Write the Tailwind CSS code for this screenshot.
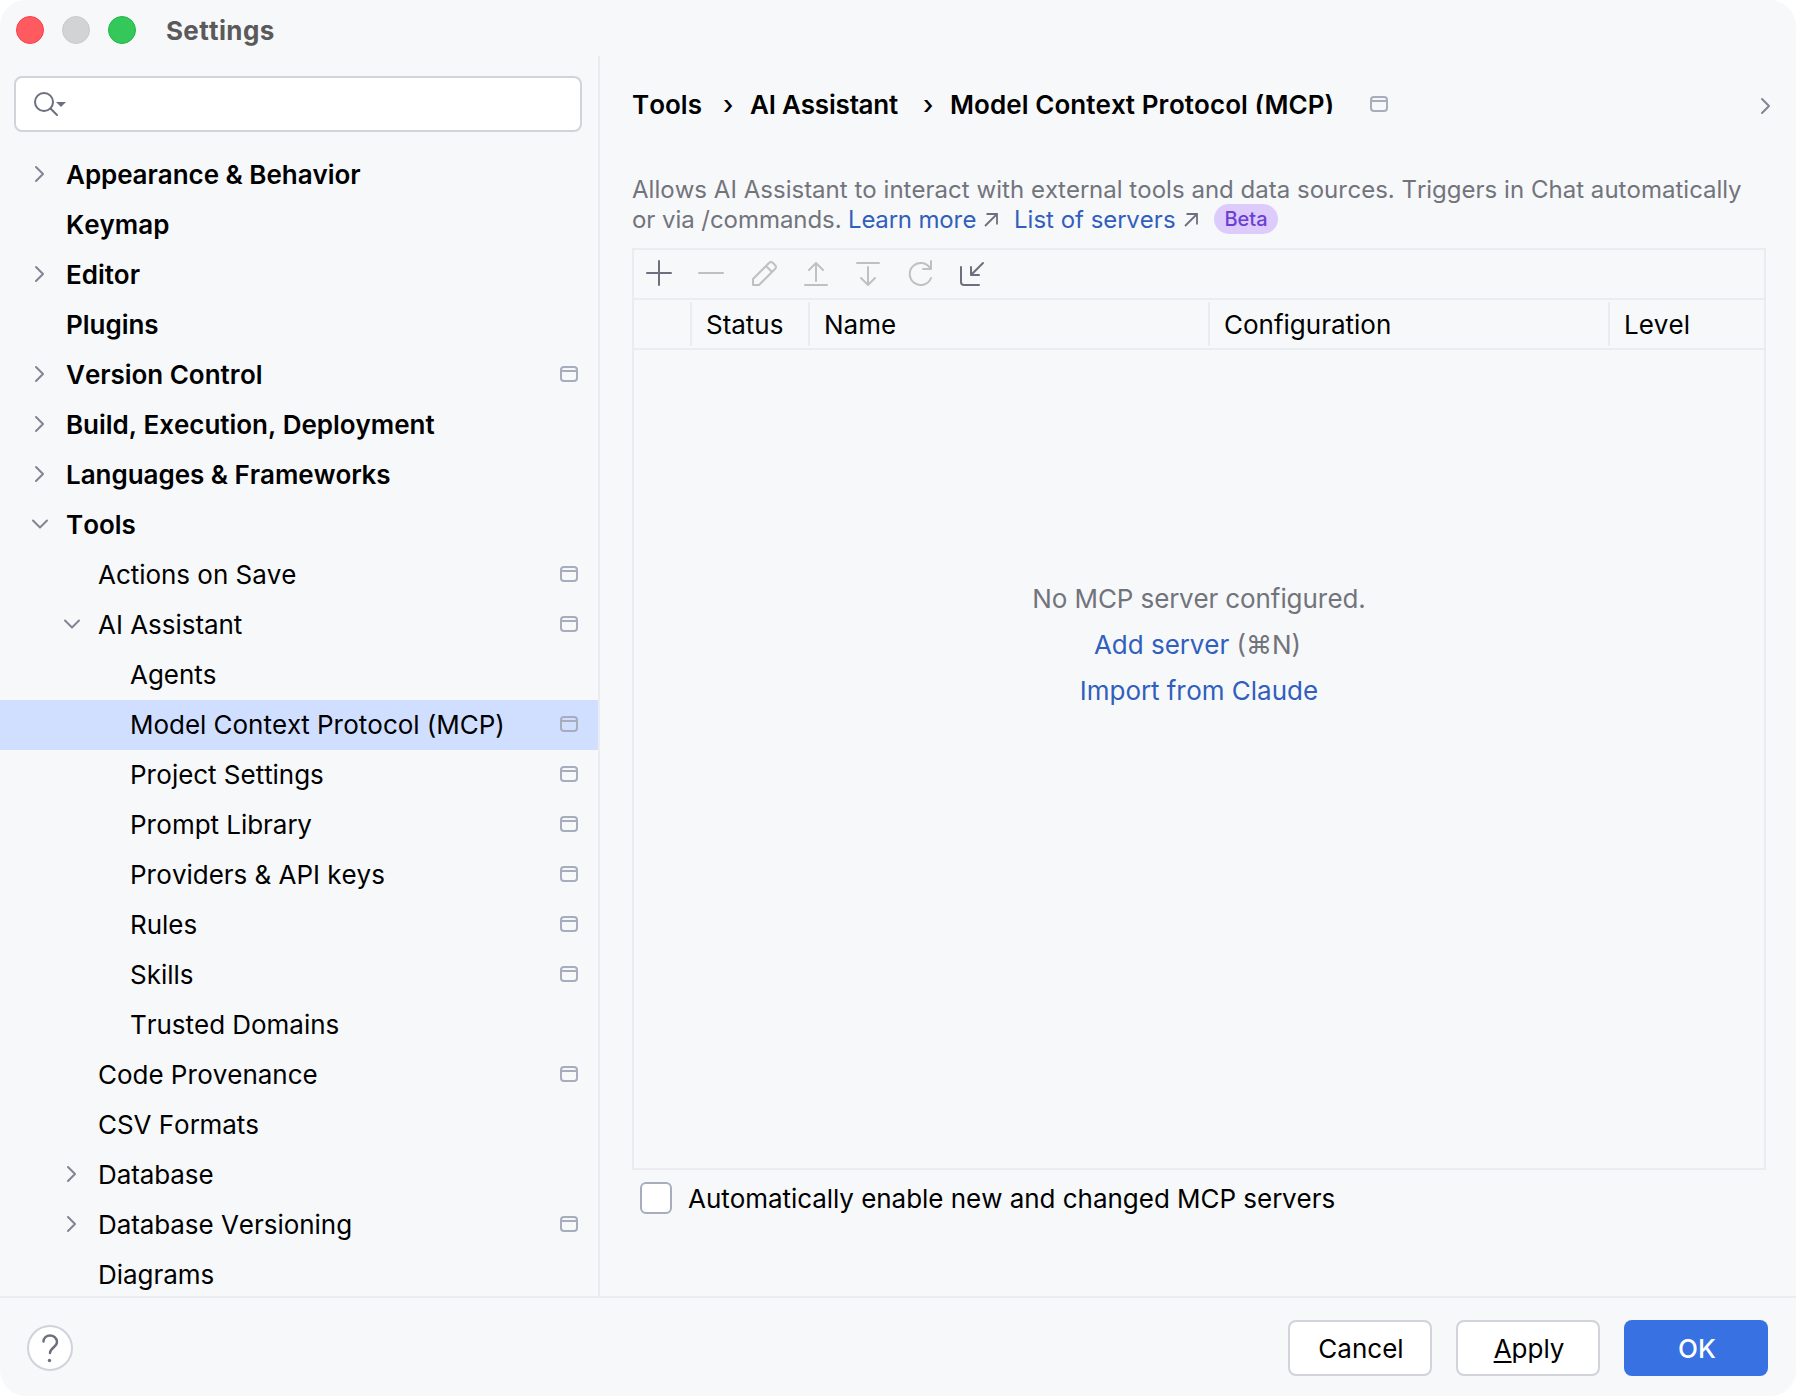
<!DOCTYPE html>
<html lang="en">
<head>
    <meta charset="UTF-8">
    <meta name="viewport" content="width=device-width, initial-scale=1.0">
    <title>Settings</title>
    <script src="https://cdn.jsdelivr.net/npm/@tailwindcss/browser@4"></script>
</head>
<body class="bg-white font-['Inter','Liberation_Sans',sans-serif] [font-kerning:none] text-[26px] leading-[50px] text-black">
    <!-- Shared icons -->
    <svg class="hidden">
        <symbol id="right" viewBox="0 0 32 32"><path d="M12 9l7 7-7 7" fill="none" stroke="currentColor" stroke-width="2" stroke-linecap="round" stroke-linejoin="round"/></symbol>
        <symbol id="down" viewBox="0 0 32 32"><path d="M9 12.500l7 7 7-7" fill="none" stroke="currentColor" stroke-width="2" stroke-linecap="round" stroke-linejoin="round"/></symbol>
        <symbol id="project" viewBox="0 0 18 16"><path d="M1 5h16M4 1h10a3 3 0 0 1 3 3v8a3 3 0 0 1-3 3H4a3 3 0 0 1-3-3V4a3 3 0 0 1 3-3z" fill="none" stroke="currentColor" stroke-width="2"/></symbol>
        <symbol id="external" viewBox="0 0 14 14"><path d="M1 13L12.500 1.500M2.500 1H13v10.500" fill="none" stroke="currentColor" stroke-width="1.800"/></symbol>
    </svg>

    <div class="flex flex-col w-[1796px] h-[1396px] rounded-[26px] bg-[#f7f8fa] overflow-hidden">
        <header class="flex items-center h-14 shrink-0 pl-4">
            <div class="flex gap-[18px] mt-1">
                <span class="size-7 rounded-full bg-[#ff5a5f] border border-[#f8414a]"></span>
                <span class="size-7 rounded-full bg-[#d2d3d5] border border-[#c9cacc]"></span>
                <span class="size-7 rounded-full bg-[#34c759] border border-[#1fb845]"></span>
            </div>
            <h1 class="ml-[30px] mt-1.5 font-bold tracking-[0.35px] text-[#5a5a5b]">Settings</h1>
        </header>

        <div class="flex h-[1240px] shrink-0">
            <aside class="w-[600px] shrink-0 border-r-2 border-[#ebecf0] pt-5 overflow-hidden">
                <div class="flex items-center w-[568px] h-14 ml-3.5 mb-[18px] pl-4 bg-white border-2 border-[#d1d3da] rounded-lg">
                    <svg class="w-10 h-8 text-[#6c707e]" viewBox="0 0 40 32">
                        <circle cx="12" cy="14" r="9" fill="none" stroke="currentColor" stroke-width="2"/>
                        <path d="M18.500 20.500l6.500 6.500" stroke="currentColor" stroke-width="2" stroke-linecap="round"/>
                        <path d="M24 14h10l-5 5z" fill="currentColor"/>
                    </svg>
                </div>
                <ul id="tree"></ul>
            </aside>

            <main class="grow pl-8 pt-6">
                <div class="flex items-start h-[50px] font-semibold">
                    <span class="w-[91px]">Tools</span>
                    <span class="w-[27px] font-medium">›</span>
                    <span class="w-[173px] tracking-[-0.2px]">AI Assistant</span>
                    <span class="w-[27px] font-medium">›</span>
                    <span class="h-[34px] overflow-hidden tracking-[0.07px]">Model Context Protocol (MCP)</span>
                    <svg class="w-[18px] h-4 mt-4 ml-auto text-[#a8adbd]"><use href="#project"/></svg>
                    <svg class="size-8 mt-[10px] ml-[362px] mr-[14px] text-[#818594]"><use href="#right"/></svg>
                </div>

                <p class="mt-[45px] text-2xl leading-[30px] text-[#72747c] whitespace-nowrap">
                    <span class="tracking-[0.03px]">Allows AI Assistant to interact with external tools and data sources. Triggers in Chat automatically</span>
                    <span class="flex items-center h-[30px]">
                        <span class="w-[216px] tracking-[-0.05px]">or via /commands.</span>
                        <a class="w-[136px] tracking-[-0.1px] text-[#315fbd]">Learn more</a>
                        <svg class="size-3.5 text-[#6c707e]"><use href="#external"/></svg>
                        <a class="ml-4 w-[170px] text-[#315fbd]">List of servers</a>
                        <svg class="size-3.5 text-[#6c707e]"><use href="#external"/></svg>
                        <span class="ml-4 -mt-0.5 w-16 h-[30px] rounded-full bg-[#dccbfb] text-[#6b3fd4] text-xl leading-[30px] font-medium text-center">Beta</span>
                    </span>
                </p>

                <section class="flex flex-col w-[1134px] h-[922px] mt-[13px] border-2 border-[#ebecf0]">
                    <div class="flex items-center gap-5 h-12 pl-3 text-[#bfc0c2]">
                        <svg class="size-8 text-[#6c707e]" viewBox="0 0 32 32" fill="none" stroke="currentColor" stroke-width="2" stroke-linecap="round"><path d="M13 3v24M1 15h24"/></svg>
                        <svg class="size-8" viewBox="0 0 32 32" fill="none" stroke="currentColor" stroke-width="2" stroke-linecap="round"><path d="M1 15h24"/></svg>
                        <svg class="size-8" viewBox="0 0 32 32" fill="none" stroke="currentColor" stroke-width="2" stroke-linejoin="round"><path d="M3 27v-6L19 5q2-2 4 0l2 2q2 2 0 4L9 27zM16 8l6 6"/></svg>
                        <svg class="size-8" viewBox="0 0 32 32" fill="none" stroke="currentColor" stroke-width="2" stroke-linecap="round" stroke-linejoin="round"><path d="M3 27h22M14 23V5M7 12l7-7 7 7"/></svg>
                        <svg class="size-8" viewBox="0 0 32 32" fill="none" stroke="currentColor" stroke-width="2" stroke-linecap="round" stroke-linejoin="round"><path d="M3 5h22M14 9v18M7 20l7 7 7-7"/></svg>
                        <svg class="size-8" viewBox="0 0 32 32" fill="none" stroke="currentColor" stroke-width="2" stroke-linecap="round" stroke-linejoin="round"><path d="M25 20a11 11 0 1 1-1-10M25 3v8h-8"/></svg>
                        <svg class="size-8 text-[#6c707e]" viewBox="0 0 32 32" fill="none" stroke="currentColor" stroke-width="2" stroke-linecap="round" stroke-linejoin="round"><path d="M3 9v15q0 3 3 3h15M25 5L13 17M13 9v8h8"/></svg>
                    </div>
                    <div class="flex items-center h-[52px] border-y-2 border-[#ebecf0]">
                        <span class="w-[58px] h-11 border-r-2 border-[#ebecf0]"></span>
                        <span class="w-[118px] h-11 pl-[14px] leading-[46px] border-r-2 border-[#ebecf0]">Status</span>
                        <span class="w-[400px] h-11 pl-[14px] leading-[46px] border-r-2 border-[#ebecf0]">Name</span>
                        <span class="w-[400px] h-11 pl-[14px] leading-[46px] border-r-2 border-[#ebecf0]">Configuration</span>
                        <span class="h-11 pl-[14px] leading-[46px]">Level</span>
                    </div>
                    <div class="pt-[226px] leading-[46px] text-center text-[#72747c]">
                        <p class="tracking-[-0.1px]">No MCP server configured.</p>
                        <p class="pr-[3px]"><a class="text-[#315fbd]">Add server</a> (⌘N)</p>
                        <p><a class="text-[#315fbd]">Import from Claude</a></p>
                    </div>
                </section>

                <label class="flex items-center h-14 pl-2 gap-4">
                    <span class="size-8 bg-white border-2 border-[#a8adbd] rounded-md"></span>
                    <span class="mt-0.5 tracking-[-0.03px]">Automatically enable new and changed MCP servers</span>
                </label>
            </main>
        </div>

        <footer class="flex items-center h-[100px] shrink-0 pl-[27px] pr-7 pt-0.5 gap-6 border-t-2 border-[#ebecf0]">
            <button class="size-[46px] mr-auto bg-white border-2 border-[#d1d3da] rounded-full">
                <svg class="size-[42px] text-[#6c707e]" viewBox="0 0 42 42" fill="none">
                    <path d="M14.500 14.500c0-3.500 3-6 6.500-6s7 2.500 7 6.500c0 5-7 6-7 11" stroke="currentColor" stroke-width="2.400" stroke-linecap="round"/>
                    <circle cx="20.500" cy="33.500" r="1.700" fill="currentColor"/>
                </svg>
            </button>
            <button class="w-36 h-14 pt-0.5 pl-0.5 leading-[50px] bg-white border-2 border-[#d1d3da] rounded-lg">Cancel</button>
            <button class="w-36 h-14 pt-0.5 pl-0.5 leading-[50px] bg-white border-2 border-[#d1d3da] rounded-lg"><u class="underline-offset-3 decoration-2">A</u>pply</button>
            <button class="w-36 h-14 pt-0.5 pl-0.5 leading-[54px] bg-[#3871e1] text-white font-medium rounded-lg">OK</button>
        </footer>
    </div>

    <script>
        const items = [
            { name: 'Appearance & Behavior', level: 0, arrow: 'right' },
            { name: 'Keymap', level: 0 },
            { name: 'Editor', level: 0, arrow: 'right' },
            { name: 'Plugins', level: 0 },
            { name: 'Version Control', level: 0, arrow: 'right', project: true },
            { name: 'Build, Execution, Deployment', level: 0, arrow: 'right' },
            { name: 'Languages & Frameworks', level: 0, arrow: 'right' },
            { name: 'Tools', level: 0, arrow: 'down' },
            { name: 'Actions on Save', level: 1, project: true },
            { name: 'AI Assistant', level: 1, arrow: 'down', project: true },
            { name: 'Agents', level: 2 },
            { name: 'Model Context Protocol (MCP)', level: 2, project: true, selected: true },
            { name: 'Project Settings', level: 2, project: true },
            { name: 'Prompt Library', level: 2, project: true },
            { name: 'Providers & API keys', level: 2, project: true },
            { name: 'Rules', level: 2, project: true },
            { name: 'Skills', level: 2, project: true },
            { name: 'Trusted Domains', level: 2 },
            { name: 'Code Provenance', level: 1, project: true },
            { name: 'CSV Formats', level: 1 },
            { name: 'Database', level: 1, arrow: 'right' },
            { name: 'Database Versioning', level: 1, arrow: 'right', project: true },
            { name: 'Diagrams', level: 1 },
        ];
        const padding = ['pl-6', 'pl-14', 'pl-[88px]'];

        document.getElementById('tree').innerHTML = items.map(item => `
            <li class="flex items-center h-[50px] pr-5 ${padding[item.level]} ${item.selected ? 'bg-[#d0deff]' : ''}">
                <svg class="size-8 -mt-0.5 mr-2.5 text-[#818594]">${item.arrow ? `<use href="#${item.arrow}"/>` : ''}</svg>
                <span class="grow tracking-[-0.03px] ${item.level === 0 ? 'font-semibold' : ''}">${item.name.replace('&', '&amp;')}</span>
                ${item.project ? '<svg class="w-[18px] h-4 -mt-0.5 text-[#a8adbd]"><use href="#project"/></svg>' : ''}
            </li>
        `).join('');
    </script>
</body>
</html>
